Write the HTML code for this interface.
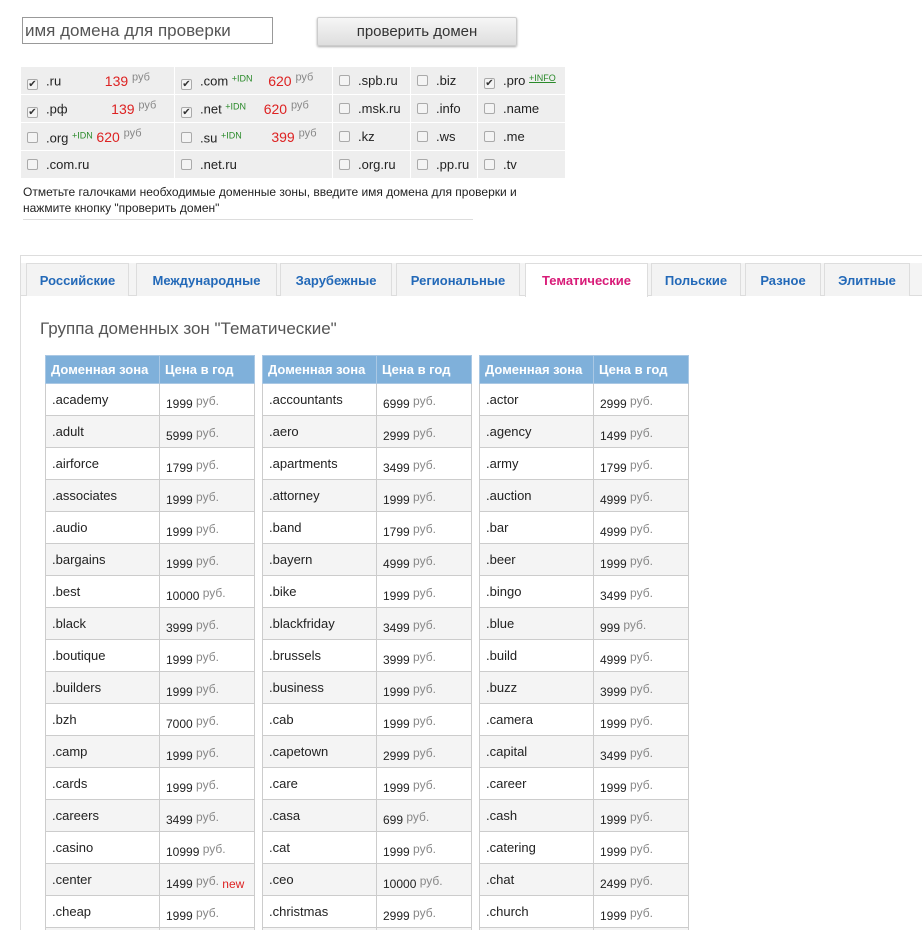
<!DOCTYPE html>
<html><head><meta charset="utf-8"><style>
*{box-sizing:border-box;margin:0;padding:0}
html,body{width:922px;height:930px;overflow:hidden}
body{background:#fff;font-family:"Liberation Sans","DejaVu Sans",sans-serif;color:#222;position:relative}
.inp{position:absolute;left:22px;top:17px;width:251px;height:27px;border:1px solid #999;font-size:17px;color:#555;padding:3px 2px}
.btn{position:absolute;left:317px;top:17px;width:200px;height:29px;border:1px solid #ccc;border-radius:2px;background:linear-gradient(#f6f6f6,#dedede);font-size:15px;color:#333;text-align:center;line-height:28px;box-shadow:0 1px 2px #aaa}
.zt{position:absolute;left:20px;top:66px;border-collapse:collapse;background:#eee;font-size:13px}
.zt td{border:1px solid #fff;height:28px;padding:0 6px;white-space:nowrap;vertical-align:middle}
.cb{display:inline-block;width:11px;height:11px;border:1px solid #aaa;border-radius:2px;background:#f4f4f4;vertical-align:-1px;margin-right:8px;font-size:10px;line-height:9px;text-align:center;color:#333}
.pr{color:#d22;font-size:14px}.pr sup{color:#888;font-size:11px}
.idn{color:#2a8a2a;font-size:9px;vertical-align:4px}
.note{position:absolute;left:23px;top:184px;width:450px;font-size:12px;line-height:16px;color:#222;border-bottom:1px solid #ddd;padding-bottom:3px;white-space:nowrap}
.panel{position:absolute;left:20px;top:255px;width:910px;height:700px;border:1px solid #ddd;border-right:none}
.tabs{position:absolute;left:0;top:7px;width:910px;height:33px;background:#f4f4f4;border-bottom:1px solid #ddd}
.tab{position:absolute;top:0;height:33px;background:#f3f3f3;border:1px solid #ddd;border-bottom:none;color:#2369b8;font-weight:bold;font-size:13px;text-align:center;line-height:33px}
.tab.a{background:#fff;color:#d81b78;height:34px}
h2{position:absolute;left:40px;top:319px;font-weight:normal;font-size:17px;color:#555}
table.p{position:absolute;top:355px;border-collapse:collapse;font-size:13px}
table.p th{background:#7fb0da;color:#fff;height:28px;font-size:13px;font-weight:bold;border:1px solid #aac8e4;padding:0 5px;text-align:left}
table.p td{border:1px solid #ccc;height:32px;padding:0 6px;white-space:nowrap}
table.p tr:nth-child(odd) td{background:#f4f4f4}
table.p td.c{font-size:12px;padding-top:5px}
.r{color:#888;font-size:12px;vertical-align:3px}
.n{color:#d22;font-size:12px}
</style></head><body>
<div class="inp">имя домена для проверки</div>
<div class="btn">проверить домен</div>
<table class="zt">
<tr><td style="width:154px"><span class="cb">✔</span>.ru <span class="pr" style="margin-left:40px">139 <sup>руб</sup></span></td><td style="width:158px"><span class="cb">✔</span>.com <span class="idn">+IDN</span> <span class="pr" style="margin-left:12px">620 <sup>руб</sup></span></td><td style="width:78px"><span class="cb"></span>.spb.ru</td><td style="width:67px"><span class="cb"></span>.biz</td><td style="width:88px"><span class="cb">✔</span>.pro <span class="idn" style="text-decoration:underline">+INFO</span></td></tr>
<tr><td><span class="cb">✔</span>.рф <span class="pr" style="margin-left:40px">139 <sup>руб</sup></span></td><td><span class="cb">✔</span>.net <span class="idn">+IDN</span> <span class="pr" style="margin-left:14px">620 <sup>руб</sup></span></td><td><span class="cb"></span>.msk.ru</td><td><span class="cb"></span>.info</td><td><span class="cb"></span>.name</td></tr>
<tr><td><span class="cb"></span>.org <span class="idn">+IDN</span> <span class="pr">620 <sup>руб</sup></span></td><td><span class="cb"></span>.su <span class="idn">+IDN</span> <span class="pr" style="margin-left:26px">399 <sup>руб</sup></span></td><td><span class="cb"></span>.kz</td><td><span class="cb"></span>.ws</td><td><span class="cb"></span>.me</td></tr>
<tr><td><span class="cb"></span>.com.ru</td><td><span class="cb"></span>.net.ru</td><td><span class="cb"></span>.org.ru</td><td><span class="cb"></span>.pp.ru</td><td><span class="cb"></span>.tv</td></tr>
</table>
<div class="note">Отметьте галочками необходимые доменные зоны, введите имя домена для проверки и<br>нажмите кнопку "проверить домен"</div>
<div class="panel"><div class="tabs">
<div class="tab" style="left:5px;width:103px">Российские</div>
<div class="tab" style="left:115px;width:141px">Международные</div>
<div class="tab" style="left:259px;width:112px">Зарубежные</div>
<div class="tab" style="left:375px;width:124px">Региональные</div>
<div class="tab a" style="left:504px;width:123px">Тематические</div>
<div class="tab" style="left:630px;width:90px">Польские</div>
<div class="tab" style="left:724px;width:76px">Разное</div>
<div class="tab" style="left:803px;width:86px">Элитные</div>
</div></div>
<h2>Группа доменных зон "Тематические"</h2>
<table class="p" style="left:45px"><tr><th style="width:114px">Доменная зона</th><th style="width:95px">Цена в год</th></tr>
<tr><td>.academy</td><td class="c">1999 <span class="r">руб.</span></td></tr>
<tr><td>.adult</td><td class="c">5999 <span class="r">руб.</span></td></tr>
<tr><td>.airforce</td><td class="c">1799 <span class="r">руб.</span></td></tr>
<tr><td>.associates</td><td class="c">1999 <span class="r">руб.</span></td></tr>
<tr><td>.audio</td><td class="c">1999 <span class="r">руб.</span></td></tr>
<tr><td>.bargains</td><td class="c">1999 <span class="r">руб.</span></td></tr>
<tr><td>.best</td><td class="c">10000 <span class="r">руб.</span></td></tr>
<tr><td>.black</td><td class="c">3999 <span class="r">руб.</span></td></tr>
<tr><td>.boutique</td><td class="c">1999 <span class="r">руб.</span></td></tr>
<tr><td>.builders</td><td class="c">1999 <span class="r">руб.</span></td></tr>
<tr><td>.bzh</td><td class="c">7000 <span class="r">руб.</span></td></tr>
<tr><td>.camp</td><td class="c">1999 <span class="r">руб.</span></td></tr>
<tr><td>.cards</td><td class="c">1999 <span class="r">руб.</span></td></tr>
<tr><td>.careers</td><td class="c">3499 <span class="r">руб.</span></td></tr>
<tr><td>.casino</td><td class="c">10999 <span class="r">руб.</span></td></tr>
<tr><td>.center</td><td class="c">1499 <span class="r">руб.</span> <span class="n">new</span></td></tr>
<tr><td>.cheap</td><td class="c">1999 <span class="r">руб.</span></td></tr>
<tr><td>&nbsp;</td><td class="c">&nbsp;</td></tr>
</table>
<table class="p" style="left:262px"><tr><th style="width:114px">Доменная зона</th><th style="width:95px">Цена в год</th></tr>
<tr><td>.accountants</td><td class="c">6999 <span class="r">руб.</span></td></tr>
<tr><td>.aero</td><td class="c">2999 <span class="r">руб.</span></td></tr>
<tr><td>.apartments</td><td class="c">3499 <span class="r">руб.</span></td></tr>
<tr><td>.attorney</td><td class="c">1999 <span class="r">руб.</span></td></tr>
<tr><td>.band</td><td class="c">1799 <span class="r">руб.</span></td></tr>
<tr><td>.bayern</td><td class="c">4999 <span class="r">руб.</span></td></tr>
<tr><td>.bike</td><td class="c">1999 <span class="r">руб.</span></td></tr>
<tr><td>.blackfriday</td><td class="c">3499 <span class="r">руб.</span></td></tr>
<tr><td>.brussels</td><td class="c">3999 <span class="r">руб.</span></td></tr>
<tr><td>.business</td><td class="c">1999 <span class="r">руб.</span></td></tr>
<tr><td>.cab</td><td class="c">1999 <span class="r">руб.</span></td></tr>
<tr><td>.capetown</td><td class="c">2999 <span class="r">руб.</span></td></tr>
<tr><td>.care</td><td class="c">1999 <span class="r">руб.</span></td></tr>
<tr><td>.casa</td><td class="c">699 <span class="r">руб.</span></td></tr>
<tr><td>.cat</td><td class="c">1999 <span class="r">руб.</span></td></tr>
<tr><td>.ceo</td><td class="c">10000 <span class="r">руб.</span></td></tr>
<tr><td>.christmas</td><td class="c">2999 <span class="r">руб.</span></td></tr>
<tr><td>&nbsp;</td><td class="c">&nbsp;</td></tr>
</table>
<table class="p" style="left:479px"><tr><th style="width:114px">Доменная зона</th><th style="width:95px">Цена в год</th></tr>
<tr><td>.actor</td><td class="c">2999 <span class="r">руб.</span></td></tr>
<tr><td>.agency</td><td class="c">1499 <span class="r">руб.</span></td></tr>
<tr><td>.army</td><td class="c">1799 <span class="r">руб.</span></td></tr>
<tr><td>.auction</td><td class="c">4999 <span class="r">руб.</span></td></tr>
<tr><td>.bar</td><td class="c">4999 <span class="r">руб.</span></td></tr>
<tr><td>.beer</td><td class="c">1999 <span class="r">руб.</span></td></tr>
<tr><td>.bingo</td><td class="c">3499 <span class="r">руб.</span></td></tr>
<tr><td>.blue</td><td class="c">999 <span class="r">руб.</span></td></tr>
<tr><td>.build</td><td class="c">4999 <span class="r">руб.</span></td></tr>
<tr><td>.buzz</td><td class="c">3999 <span class="r">руб.</span></td></tr>
<tr><td>.camera</td><td class="c">1999 <span class="r">руб.</span></td></tr>
<tr><td>.capital</td><td class="c">3499 <span class="r">руб.</span></td></tr>
<tr><td>.career</td><td class="c">1999 <span class="r">руб.</span></td></tr>
<tr><td>.cash</td><td class="c">1999 <span class="r">руб.</span></td></tr>
<tr><td>.catering</td><td class="c">1999 <span class="r">руб.</span></td></tr>
<tr><td>.chat</td><td class="c">2499 <span class="r">руб.</span></td></tr>
<tr><td>.church</td><td class="c">1999 <span class="r">руб.</span></td></tr>
<tr><td>&nbsp;</td><td class="c">&nbsp;</td></tr>
</table>
</body></html>
